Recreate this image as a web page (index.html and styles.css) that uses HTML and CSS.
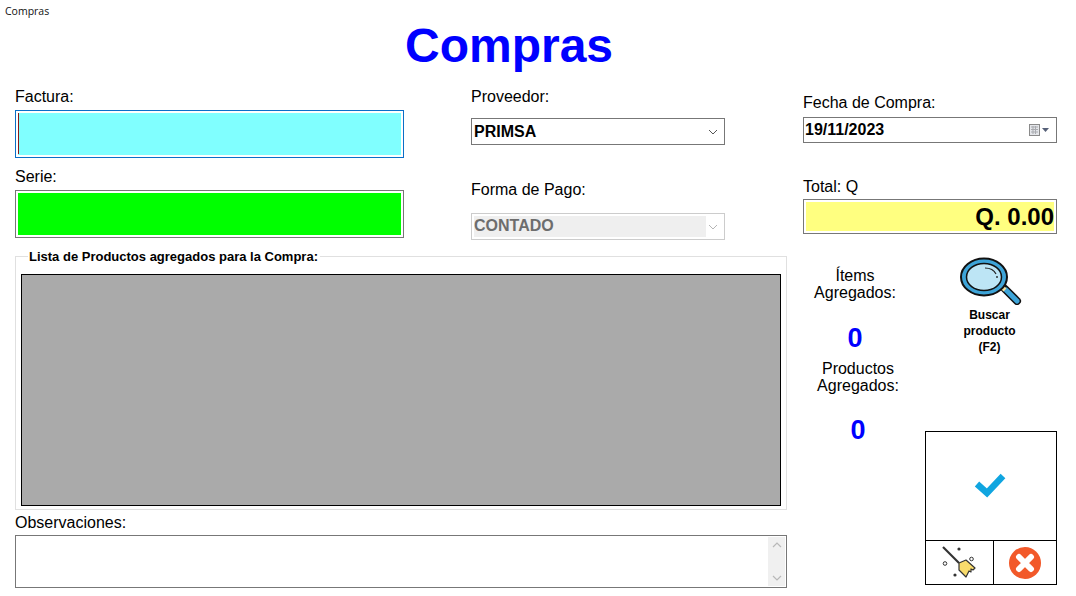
FILE: index.html
```html
<!DOCTYPE html>
<html lang="es">
<head>
<meta charset="utf-8">
<title>Compras</title>
<link rel="stylesheet" href="styles.css">
</head>
<body>
<div class="titlebar">Compras</div>
<h1 class="title">Compras</h1>
<div class="content">
  <div class="left">
    <div class="top-row">
      <div class="col-a">
        <div class="label">Factura:</div>
        <div class="box box-cyan"><span class="caret"></span></div>
        <div class="label label-serie">Serie:</div>
        <div class="box box-green"></div>
      </div>
      <div class="col-b">
        <div class="label label-prov">Proveedor:</div>
        <div class="select">
          <span class="select-text">PRIMSA</span>
          <svg class="chev" width="10" height="6" viewBox="0 0 10 6"><path d="M1 1l4 4 4-4" fill="none" stroke="#555" stroke-width="1"/></svg>
        </div>
        <div class="label label-pago">Forma de Pago:</div>
        <div class="select select-off">
          <span class="select-text">CONTADO</span>
          <svg class="chev" width="10" height="6" viewBox="0 0 10 6"><path d="M1 1l4 4 4-4" fill="none" stroke="#b5b5b5" stroke-width="1"/></svg>
        </div>
      </div>
    </div>
    <fieldset class="group">
      <legend class="group-title">Lista de Productos agregados para la Compra:</legend>
      <div class="grid-area"></div>
    </fieldset>
    <div class="label label-obs">Observaciones:</div>
    <div class="notes">
      <div class="scrollbar">
        <svg width="10" height="6" viewBox="0 0 10 6"><path d="M1 5l4-4 4 4" fill="none" stroke="#b8b8b8" stroke-width="1.2"/></svg>
        <svg width="10" height="6" viewBox="0 0 10 6"><path d="M1 1l4 4 4-4" fill="none" stroke="#b8b8b8" stroke-width="1.2"/></svg>
      </div>
    </div>
  </div>
  <div class="right">
    <div class="label label-fecha">Fecha de Compra:</div>
    <div class="date">
      <span class="select-text">19/11/2023</span>
      <svg class="cal" width="21" height="12" viewBox="0 0 21 12">
        <rect x="0.5" y="0.5" width="10" height="11" fill="#e4e6ea" stroke="#8a8a8a"/>
        <path d="M2 3h7M2 5.500h7M2 8h7M4 2v8M6.500 2v8" stroke="#a9abb0" stroke-width="1"/>
        <path d="M13 4h7l-3.500 4z" fill="#566078"/>
      </svg>
    </div>
    <div class="label label-total">Total: Q</div>
    <div class="total">Q. 0.00</div>
    <div class="lower">
      <div class="stats">
        <div class="stat-label">Ítems<br>Agregados:</div>
        <div class="stat-num">0</div>
        <div class="stat-label stat-shift">Productos<br>Agregados:</div>
        <div class="stat-num stat-shift stat-num-2">0</div>
      </div>
      <div class="tools">
        <div class="search">
          <svg class="lens" width="62" height="48" viewBox="0 0 62 48">
            <path d="M45 32L57 44" stroke="#111" stroke-width="8" stroke-linecap="round"/>
            <path d="M46 33L57 44" stroke="#3da4d8" stroke-width="5" stroke-linecap="round"/>
            <path d="M41 29l4 4" stroke="#f3e3a0" stroke-width="4"/>
            <ellipse cx="24" cy="20" rx="23" ry="18.500" fill="#3da4d8" stroke="#111" stroke-width="2"/>
            <ellipse cx="24" cy="20" rx="17.500" ry="13.500" fill="#bde5f5" stroke="#111" stroke-width="1.500"/>
            <path d="M25 11c5 0 9 2 11 6" fill="none" stroke="#222" stroke-width="1.200"/>
            <circle cx="37" cy="20" r="0.900" fill="#222"/>
          </svg>
          <div class="search-text">Buscar<br>producto<br>(F2)</div>
        </div>
        <div class="actions">
          <div class="act-main">
            <svg width="34" height="28" viewBox="0 0 34 28"><path d="M3 13l10 9L29 5" fill="none" stroke="#10a5e0" stroke-width="6.500"/></svg>
          </div>
          <div class="act-row">
            <div class="act-broom">
              <svg width="38" height="36" viewBox="0 0 38 36">
                <path d="M2 2L18 18" stroke="#333" stroke-width="2.200"/>
                <path d="M18 18l7-3 9 8-2 2-2-1 0 3-2-1-3 6-7-7z" fill="#f9dc6c" stroke="#333" stroke-width="1.200" stroke-linejoin="round"/>
                <circle cx="18" cy="4" r="1.600" fill="#333"/>
                <circle cx="14" cy="30" r="1.600" fill="#333"/>
                <circle cx="30.500" cy="14" r="1.800" fill="none" stroke="#333" stroke-width="1"/>
                <circle cx="4" cy="18.500" r="1.800" fill="none" stroke="#333" stroke-width="1"/>
              </svg>
            </div>
            <div class="act-cancel">
              <svg width="32" height="32" viewBox="0 0 32 32">
                <circle cx="16" cy="16" r="16" fill="#f2592a"/>
                <path d="M10 10l12 12M22 10L10 22" stroke="#fff" stroke-width="6" stroke-linecap="round"/>
              </svg>
            </div>
          </div>
        </div>
      </div>
    </div>
  </div>
</div>
</body>
</html>
```
FILE: styles.css
```css
* { box-sizing: border-box; }
html, body { margin: 0; height: 596px; overflow: hidden; background: #fff; }
body { font-family: "Liberation Sans", Arial, sans-serif; color: #000; }
.titlebar { font-family: "Open Sans", sans-serif; font-size: 10.500px; line-height: 14px; padding: 4px 5px 0; height: 18px; color: #111; }
.title { margin: 0; width: 1018px; height: 70px; font-size: 48px; line-height: 56px; font-weight: bold; color: #0000ff; text-align: center; }
.content { display: flex; gap: 16px; padding-left: 15px; }
.left { width: 772px; }
.right { width: 254px; }
.top-row { display: flex; }
.col-a { width: 389px; }
.col-b { width: 254px; margin-left: 67px; }
.label { font-size: 16px; line-height: 18px; height: 18px; }
.box { height: 48px; margin-top: 4px; border: 1px solid #777; padding: 2px; background: #fff; background-clip: padding-box; position: relative; }
.box-cyan { border-color: #0a6fc8; background: linear-gradient(#80ffff, #80ffff) content-box; }
.box-green { background: linear-gradient(#00ff00, #00ff00) content-box; }
.caret { display: block; width: 1px; height: 41px; background: #8b1a1a; margin-left: 0; }
.label-serie { margin-top: 10px; }
.label-prov { margin-top: 0; }
.select { height: 27px; margin-top: 12px; border: 1px solid #777; display: flex; align-items: center; justify-content: space-between; padding: 0 3px 0 2px; }
.select-text { font-size: 16px; font-weight: bold; }
.chev { margin-right: 3px; }
.label-pago { margin-top: 36px; }
.select-off { margin-top: 14px; border-color: #ccc; padding: 2px 3px 2px 2px; }
.select-off .select-text { color: #6d6d6d; background: #efefef; flex: 0 0 232px; height: 21px; line-height: 19px; }
.group { display: block; margin: 9px 0 0; padding: 10px 5px 4px; width: 772px; height: 261px; border: 1px solid #e0e0e0; min-width: 0; }
.group-title { font-size: 13px; font-weight: bold; padding: 0 2px 0 1px; margin-left: 7px; line-height: 15px; }
.grid-area { height: 232px; background: #aaaaaa; border: 1px solid #000; }
.label-obs { margin-top: 4px; }
.notes { height: 53px; margin-top: 3px; border: 1px solid #777; padding: 1px; display: flex; justify-content: flex-end; }
.scrollbar { width: 17px; background: #f0f0f0; display: flex; flex-direction: column; justify-content: space-between; align-items: center; padding: 5px 0; }
.label-fecha { margin-top: 6px; }
.date { height: 26px; margin-top: 5px; border: 1px solid #777; display: flex; align-items: center; justify-content: space-between; padding: 0 6px 0 1px; }
.label-total { margin-top: 35px; }
.total { height: 35px; margin-top: 3px; border: 1px solid #777; padding: 2px; background: linear-gradient(#ffff80, #ffff80) content-box; font-size: 24px; font-weight: bold; line-height: 30px; text-align: right; }
.lower { display: flex; }
.stats { width: 110px; margin-left: -3px; }
.stat-label { font-size: 16px; line-height: 17px; text-align: center; }
.stats > .stat-label:first-child { margin-top: 33px; }
.stat-num { font-size: 27px; font-weight: bold; color: #0000ff; text-align: center; line-height: 30px; margin-top: 22px; }
.stat-shift { position: relative; left: 3px; }
.stat-label.stat-shift { margin-top: 7px; }
.stat-num-2 { margin-top: 21px; }
.tools { margin-left: 15px; width: 132px; }
.search { height: 197px; display: flex; flex-direction: column; align-items: center; padding-top: 23px; padding-right: 3px; }
.lens { display: block; margin-left: 3px; }
.search-text { font-size: 12px; font-weight: bold; line-height: 16px; text-align: center; margin-top: 2px; }
.actions { width: 132px; height: 154px; border: 1px solid #000; display: flex; flex-direction: column; }
.act-main { flex: 1; display: flex; align-items: center; justify-content: center; padding-bottom: 2px; }
.act-row { height: 44px; border-top: 1px solid #000; display: flex; }
.act-broom { width: 68px; border-right: 1px solid #000; display: flex; align-items: center; justify-content: center; }
.act-cancel { flex: 1; display: flex; align-items: center; justify-content: center; }
```
